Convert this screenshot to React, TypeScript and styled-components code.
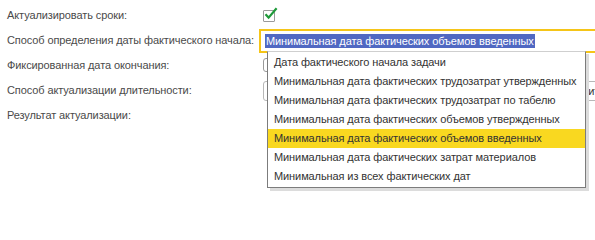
import { FC } from 'react';
import styled, { createGlobalStyle } from 'styled-components';

const GlobalStyle = createGlobalStyle`
  html, body {
    margin: 0;
    padding: 0;
    background: #ffffff;
  }
  body {
    font-family: 'Liberation Sans', Arial, sans-serif;
    font-size: 11px;
    letter-spacing: -0.1px;
    overflow: hidden;
  }
`;

const Root = styled.div`
  position: relative;
  width: 595px;
  height: 202px;
  overflow: hidden;
  padding: 2px 0 0 7px;
  box-sizing: border-box;
`;

const Form = styled.div`
  display: grid;
  grid-template-columns: 256px 1fr;
  grid-auto-rows: 25px;
  align-items: center;
`;

const Label = styled.div`
  color: #4a4a4a;
  white-space: nowrap;
`;

const Cell = styled.div`
  display: flex;
  align-items: center;
  min-width: 0;
  height: 100%;
`;

const CheckBox = styled.div<{ $checked?: boolean }>`
  position: relative;
  flex-shrink: 0;
  width: 10px;
  height: ${p => (p.$checked ? '10px' : '12px')};
  border: 1px solid #9a9a9a;
  border-radius: ${p => (p.$checked ? '1px' : '3px')};
  background: #fff;
  margin-top: ${p => (p.$checked ? '2px' : '0')};
  svg {
    position: absolute;
    left: 0px;
    top: -4px;
  }
`;

// 選択中の入力欄
const FocusedInput = styled.div`
  flex-shrink: 0;
  margin-left: -4px;
  width: 400px;
  height: 20px;
  border: 2px solid #f5c518;
  background: #fff;
  display: flex;
  align-items: center;
  padding-left: 4px;
  margin-top: 2px;
`;

const Selected = styled.span`
  background: #5068c2;
  color: #ffffff;
  line-height: 14px;
  padding: 0 1px;
  white-space: nowrap;
`;

const TextField = styled.div`
  flex-shrink: 0;
  width: 400px;
  height: 18px;
  border: 1px solid #b8b8b8;
  border-radius: 3px;
  background: #fff;
  display: flex;
  align-items: center;
  padding-left: 5px;
  color: #333;
  white-space: nowrap;
  overflow: hidden;
  margin-top: 2px;
`;

// ドロップダウン
const DropDown = styled.ul`
  position: absolute;
  left: 267px;
  top: 51px;
  width: 317px;
  margin: 0;
  padding: 1px 0;
  list-style: none;
  background: #fff;
  border: 1px solid #7c7c7c;
  border-top-color: #cfcfcf;
  box-shadow: 3px 3px 0 #dcdcdc;
`;

const Item = styled.li<{ $active?: boolean }>`
  height: 19px;
  line-height: 19px;
  padding-left: 6px;
  color: #333333;
  background: ${p => (p.$active ? '#f9d820' : 'transparent')};
  white-space: nowrap;
`;

const items = [
  'Дата фактического начала задачи',
  'Минимальная дата фактических трудозатрат утвержденных',
  'Минимальная дата фактических трудозатрат по табелю',
  'Минимальная дата фактических объемов утвержденных',
  'Минимальная дата фактических объемов введенных',
  'Минимальная дата фактических затрат материалов',
  'Минимальная из всех фактических дат'
];

const Check: FC = () => (
  <svg width="14" height="14" viewBox="0 0 14 14">
    <path d="M1.5 7.2 L4.6 10.6 L12.6 1.2" fill="none" stroke="#1f9a3a" strokeWidth="2.2" strokeLinejoin="miter" />
  </svg>
);

const App: FC = () => {
  const active = 4;
  return (
    <Root>
      <GlobalStyle />
      <Form>
        <Label>Актуализировать сроки:</Label>
        <Cell>
          <CheckBox $checked>
            <Check />
          </CheckBox>
        </Cell>

        <Label>Способ определения даты фактического начала:</Label>
        <Cell>
          <FocusedInput>
            <Selected>Минимальная дата фактических объемов введенных</Selected>
          </FocusedInput>
        </Cell>

        <Label>Фиксированная дата окончания:</Label>
        <Cell>
          <CheckBox />
        </Cell>

        <Label>Способ актуализации длительности:</Label>
        <Cell>
          <TextField>Пересчитывать дату окончания с сохранением фактической длительности</TextField>
        </Cell>

        <Label>Результат актуализации:</Label>
        <Cell />
      </Form>
      <DropDown>
        {items.map((item, key) => (
          <Item key={key} $active={key === active}>
            {item}
          </Item>
        ))}
      </DropDown>
    </Root>
  );
};

export default App;
